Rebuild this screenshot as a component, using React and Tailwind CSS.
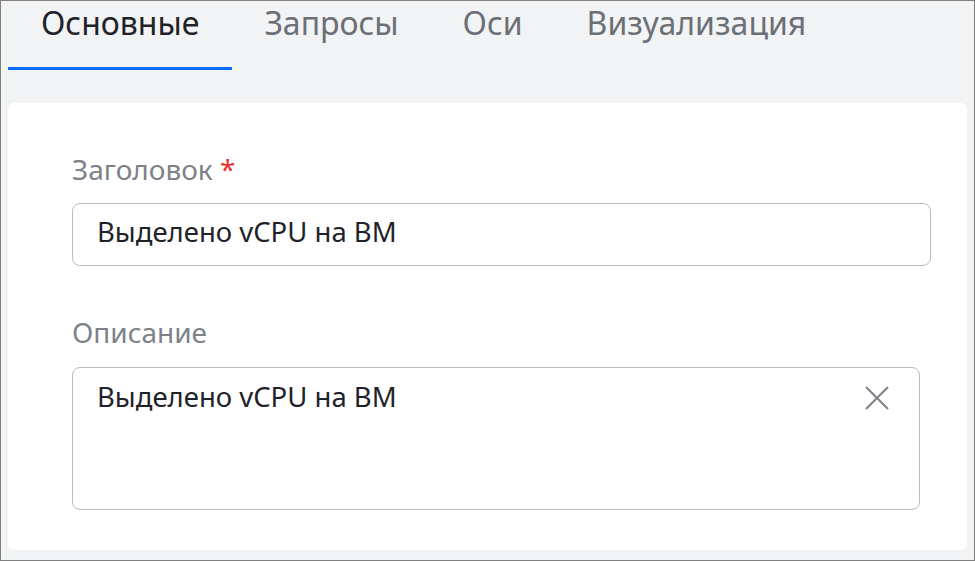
const tabs = ['Основные', 'Запросы', 'Оси', 'Визуализация'];

export default function App() {
  return (
    <div
      className="w-[975px] h-[561px] bg-[#f2f3f5] border border-[#808080] overflow-hidden"
      style={{ fontFamily: '"Noto Sans", "Open Sans", sans-serif' }}
    >
      <div className="flex pl-[7px] h-[69px]">
        {tabs.map((t, i) => (
          <div
            key={t}
            className={
              i === 0
                ? 'px-[33px] text-[32px] leading-[44px] text-[#1f2329] border-b-[3px] border-[#0a6cff]'
                : 'px-[32px] text-[32px] leading-[44px] text-[#6b6f76]'
            }
          >
            {t}
          </div>
        ))}
      </div>

      <div className="mx-[7px] mt-[33px] h-[447px] bg-white rounded-[6px] pl-[64px] pr-[36px] pt-[48px]">
        <div className="text-[28px] leading-[36px] text-[#7d8289]">
          Заголовок <span className="text-[#e5312f]">*</span>
        </div>
        <div className="mt-[16px] h-[63px] border border-[#b8bbc2] rounded-[8px] flex items-center pl-[24px] pb-[5px] text-[27.5px] text-[#1f2329]">
          Выделено vCPU на ВМ
        </div>

        <div className="mt-[48px] text-[28px] leading-[36px] text-[#7d8289]">
          Описание
        </div>
        <div className="mt-[17px] mr-[11px] h-[143px] border border-[#b8bbc2] rounded-[8px] flex justify-between pl-[24px] pr-[30px] pt-[11px] text-[27.5px] leading-[36px] text-[#1f2329]">
          <span>Выделено vCPU на ВМ</span>
          <svg
            className="mt-[7px] w-[24px] h-[24px] text-[#7d8289]"
            viewBox="0 0 24 24"
            fill="none"
            stroke="currentColor"
            strokeWidth="2"
          >
            <path d="M1 1L23 23M23 1L1 23" />
          </svg>
        </div>
      </div>
    </div>
  );
}
